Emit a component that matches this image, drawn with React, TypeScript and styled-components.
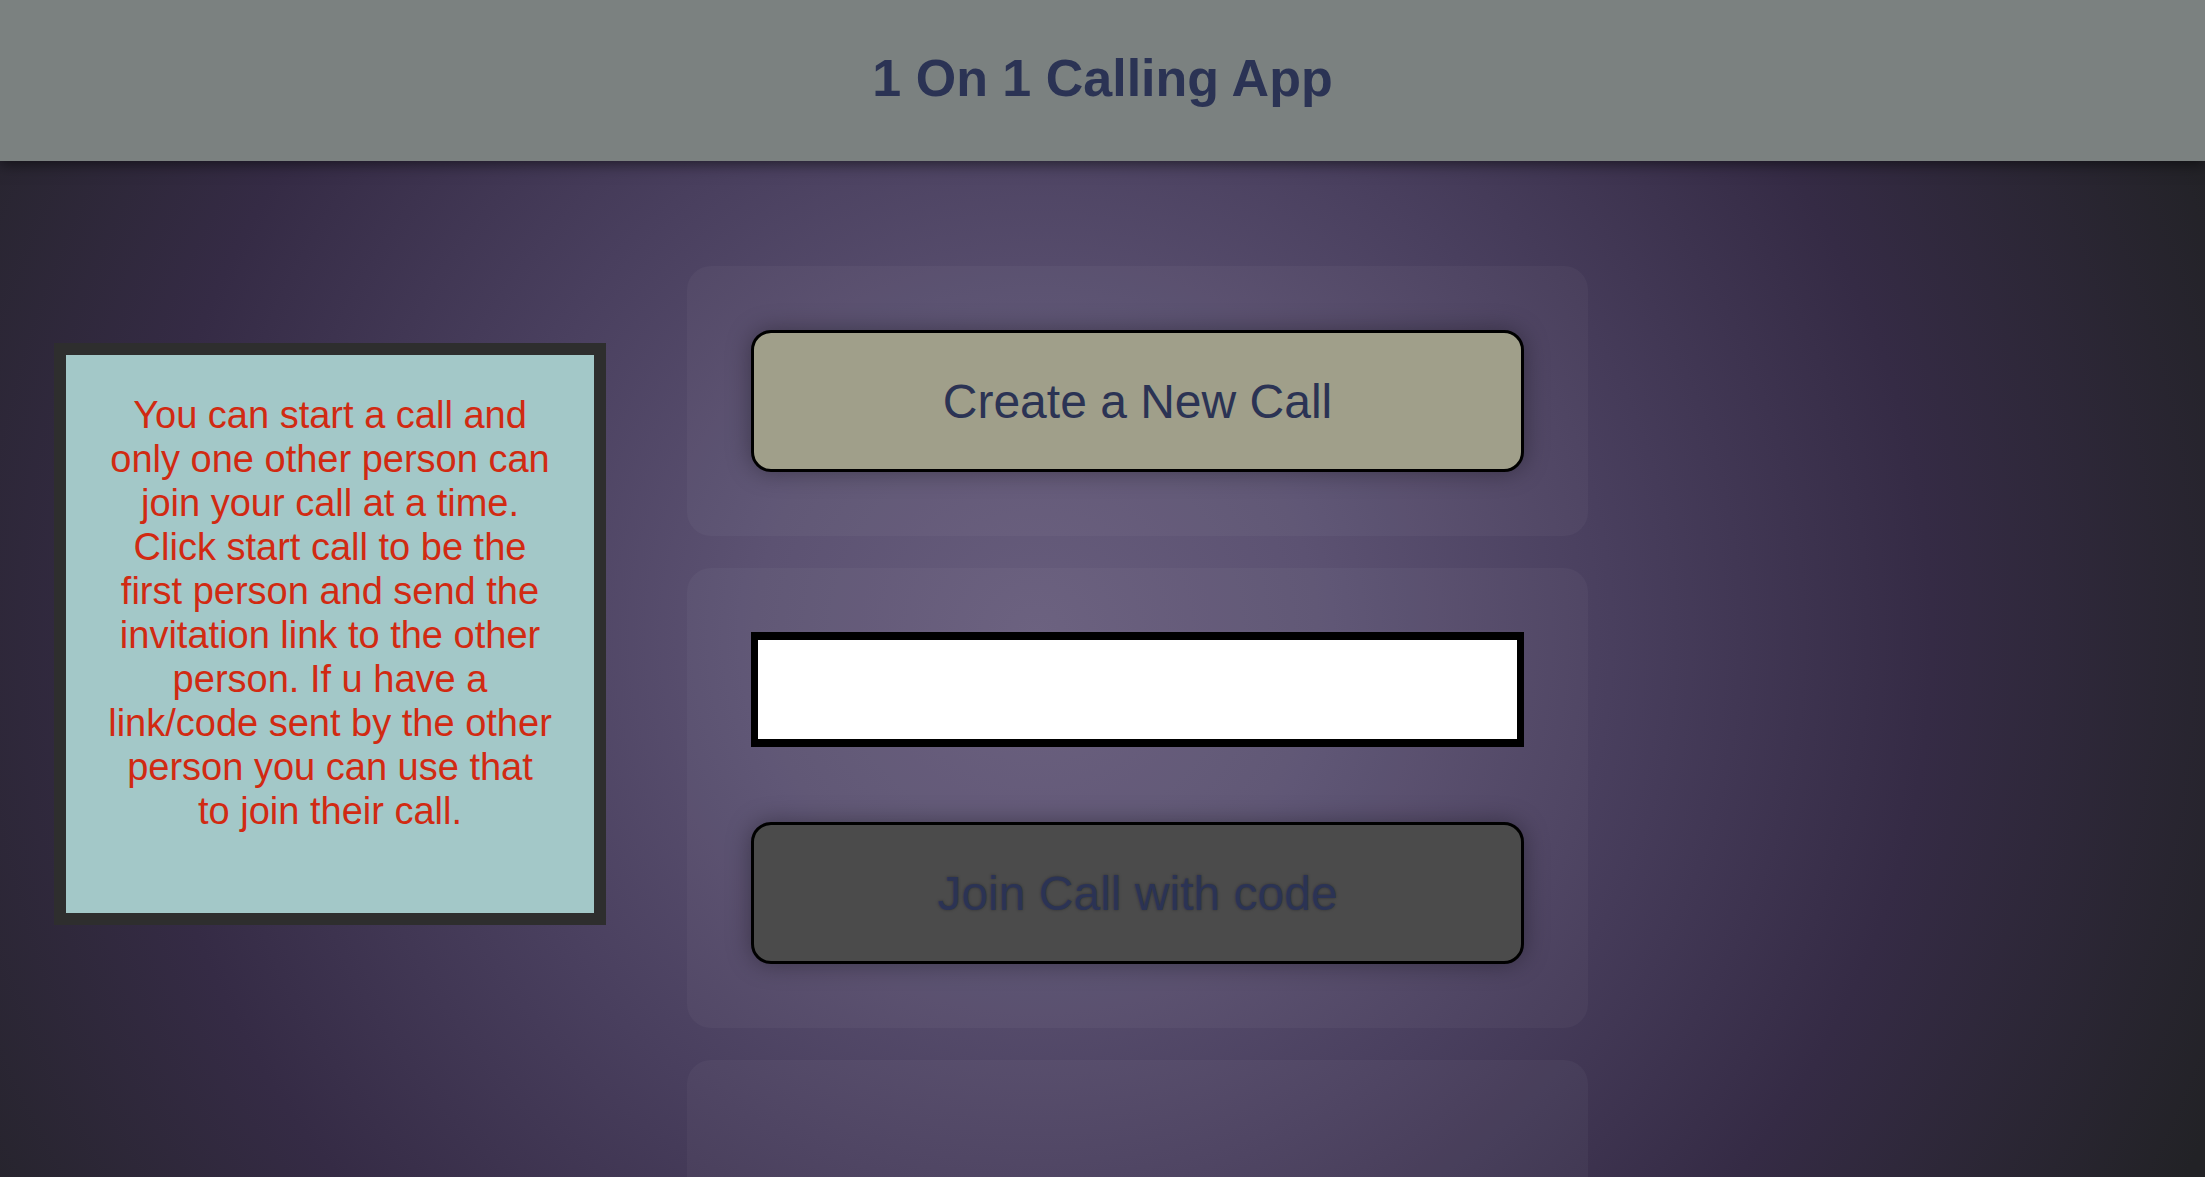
import React from "react";
import styled, { createGlobalStyle } from "styled-components";

const GlobalStyle = createGlobalStyle`
  html, body {
    margin: 0;
    padding: 0;
    height: 100%;
    overflow: hidden;
  }
  body {
    font-family: "Liberation Sans", Arial, sans-serif;
  }
  * { box-sizing: border-box; }
`;

const Page = styled.div`
  width: 100%;
  height: 100vh;
  display: flex;
  flex-direction: column;
  background: radial-gradient(
    ellipse 58% 105% at 47% 54%,
    #675d7c 0%,
    #5c5272 22%,
    #493f5e 45%,
    #352b45 70%,
    #222226 100%
  );
  overflow: hidden;
`;

const Header = styled.header`
  flex: 0 0 161px;
  height: 161px;
  background: #7b8180;
  display: flex;
  align-items: center;
  justify-content: center;
  padding-bottom: 6px;
  box-shadow: 0 3px 14px rgba(0, 0, 0, 0.55);
  position: relative;
  z-index: 1;
`;

const Title = styled.h1`
  margin: 0;
  font-size: 52px;
  font-weight: bold;
  color: #2b3354;
`;

const Main = styled.main`
  display: flex;
  align-items: flex-start;
  padding-left: 54px;
`;

const InfoCard = styled.aside`
  margin-top: 182px;
  width: 552px;
  height: 582px;
  flex: 0 0 auto;
  border: 12px solid #2e2e2e;
  background: #a3c8c8;
  padding: 0 41px;
  text-align: center;
  color: #d12a12;
  font-size: 38px;
  line-height: 44px;
`;

const InfoText = styled.p`
  margin: 38px 0 0;
`;

const Column = styled.section`
  margin-left: 81px;
  margin-top: 105px;
  width: 901px;
  display: flex;
  flex-direction: column;
  gap: 32px;
`;

const Panel = styled.div<{ $height?: number }>`
  padding: 64px;
  border-radius: 24px;
  background: rgba(255, 255, 255, 0.035);
  display: flex;
  flex-direction: column;
  ${(p) => (p.$height ? `height: ${p.$height}px;` : "")}
`;

const ActionButton = styled.button<{ $tone: "light" | "dark" }>`
  width: 100%;
  height: 142px;
  border: 3px solid #000;
  border-radius: 20px;
  background: ${(p) => (p.$tone === "light" ? "#a09f8a" : "#4b4b4b")};
  color: #2b3354;
  font-family: "Liberation Sans", Arial, sans-serif;
  font-size: 48px;
  box-shadow: 0 0 24px rgba(0, 0, 0, 0.35);
  cursor: pointer;
  ${(p) => (p.$tone === "dark" ? "text-shadow: 0 0 3px rgba(0,0,0,0.35);" : "")}
`;

const CodeInput = styled.input`
  width: 100%;
  height: 115px;
  border: 8px solid #000;
  border-left-width: 7px;
  border-right-width: 7px;
  background: #fff;
  margin: 0 0 75px;
  font-size: 32px;
  padding: 0 16px;
  outline: none;
`;

export default function App() {
  return (
    <>
      <GlobalStyle />
      <Page>
        <Header>
          <Title>1 On 1 Calling App</Title>
        </Header>
        <Main>
          <InfoCard>
            <InfoText>
              You can start a call and only one other person can join your call
              at a time. Click start call to be the first person and send the
              invitation link to the other person. If u have a link/code sent by
              the other person you can use that to join their call.
            </InfoText>
          </InfoCard>
          <Column>
            <Panel>
              <ActionButton $tone="light">Create a New Call</ActionButton>
            </Panel>
            <Panel>
              <CodeInput type="text" />
              <ActionButton $tone="dark">Join Call with code</ActionButton>
            </Panel>
            <Panel $height={300} />
          </Column>
        </Main>
      </Page>
    </>
  );
}
